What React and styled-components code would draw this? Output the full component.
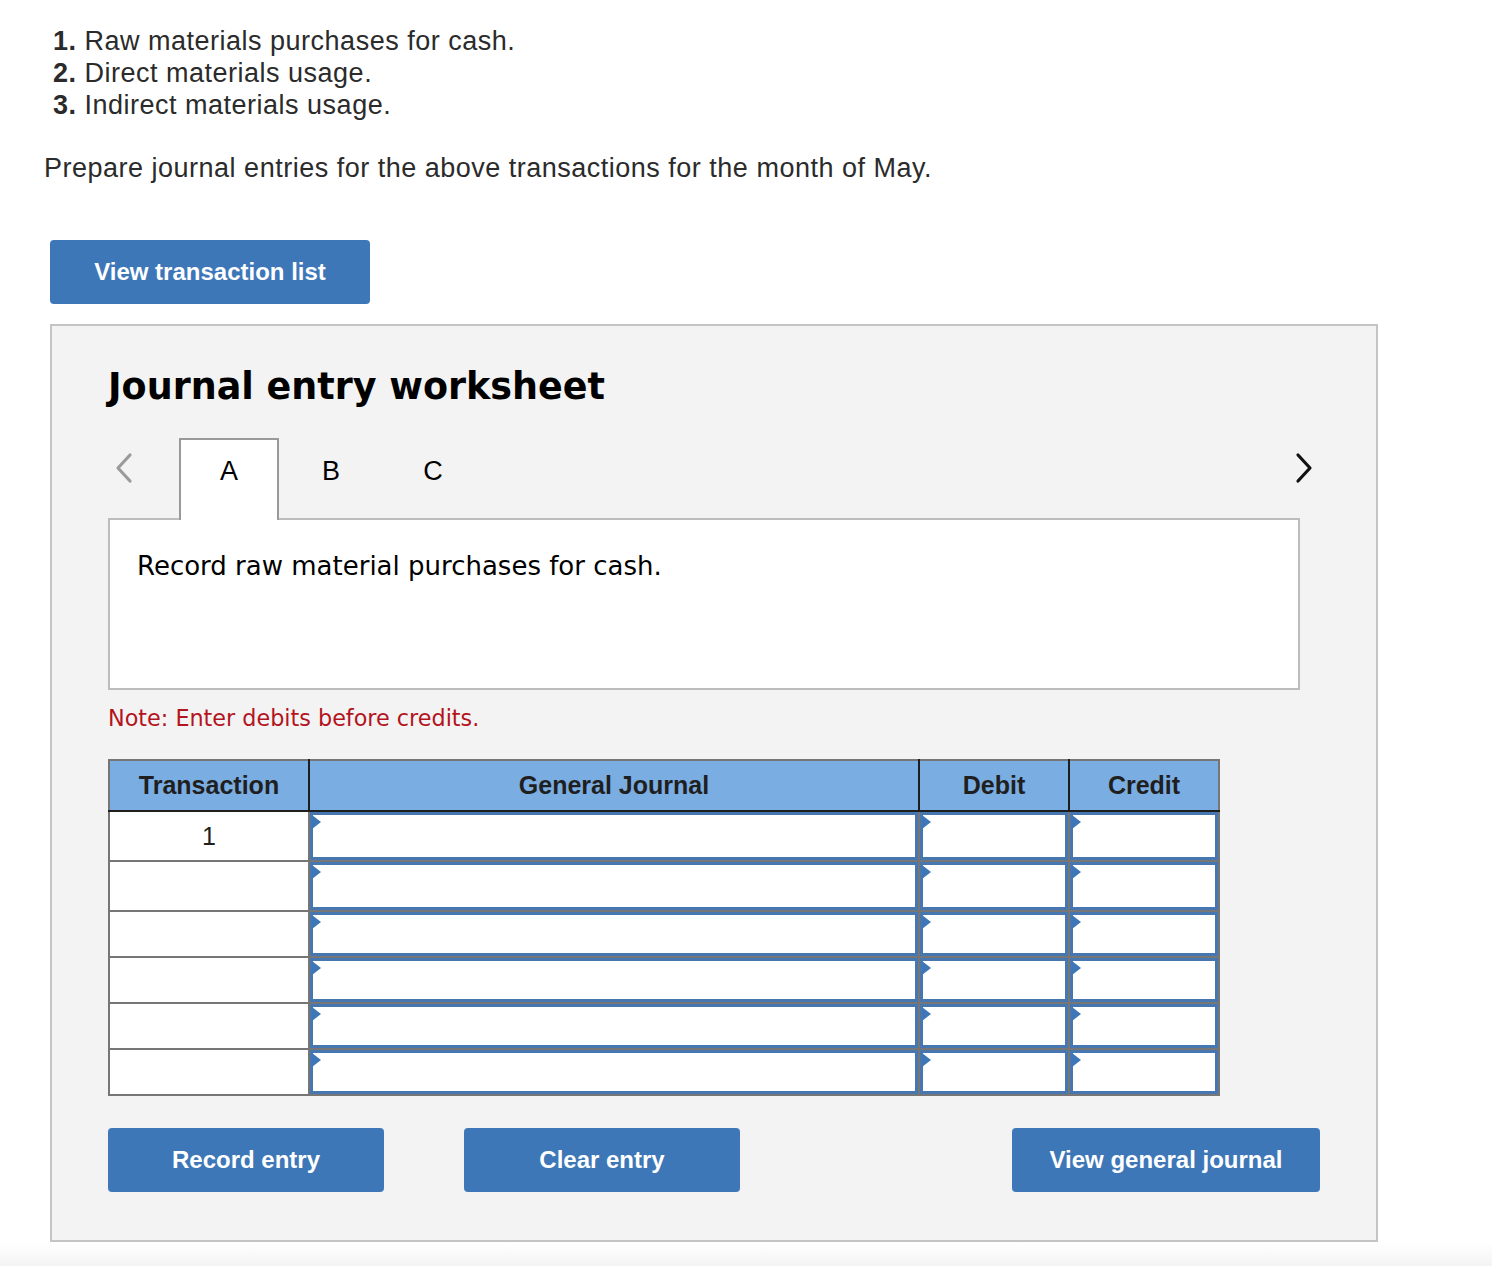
import React from "react";
import styled, { createGlobalStyle } from "styled-components";

const GlobalStyle = createGlobalStyle`
  body {
    margin: 0;
    background: #ffffff;
    font-family: "Liberation Sans", Arial, sans-serif;
    color: #2b2b2b;
  }
`;

const Page = styled.div`
  width: 1492px;
  min-height: 1266px;
  padding-top: 25px;
  box-sizing: border-box;
  background: linear-gradient(to bottom, #ffffff 1242px, #f4f4f4 1266px);
`;

const List = styled.ol`
  list-style: none;
  margin: 0;
  padding: 0 0 0 53px;
  font-size: 27px;
  letter-spacing: 0.5px;
  line-height: 32px;
`;

const Item = styled.li`
  b {
    font-weight: bold;
  }
`;

const Lead = styled.p`
  margin: 31px 0 0 44px;
  font-size: 27px;
  letter-spacing: 0.5px;
  line-height: 32px;
`;

const BlueButton = styled.button`
  display: flex;
  align-items: center;
  justify-content: center;
  width: ${({ w }) => w}px;
  height: 64px;
  border: none;
  border-radius: 4px;
  background: #3d77b8;
  color: #ffffff;
  font-family: "Liberation Sans", Arial, sans-serif;
  font-weight: bold;
  font-size: 24px;
  padding: 0;
  cursor: pointer;
  margin-left: ${({ ml }) => (ml ? `${ml}px` : "0")};
`;

const TopButton = styled(BlueButton)`
  margin: 56px 0 0 50px;
`;

const Panel = styled.section`
  width: 1328px;
  height: 918px;
  margin: 20px 0 0 50px;
  box-sizing: border-box;
  border: 2px solid #c4c4c4;
  background: #f3f3f3;
  padding: 39px 56px 0;
`;

const Title = styled.h2`
  margin: 0;
  font-family: "DejaVu Sans", Verdana, sans-serif;
  font-weight: bold;
  font-size: 36.5px;
  line-height: 44px;
  color: #000;
`;

const TabRow = styled.div`
  display: flex;
  align-items: flex-start;
  height: 82px;
  margin-top: 29px;
  position: relative;
  z-index: 1;
`;

const Arrow = styled.div`
  width: 71px;
  display: flex;
  padding-top: 14px;
  box-sizing: border-box;
  margin-left: ${({ right }) => (right ? "auto" : "0")};
  justify-content: ${({ right }) => (right ? "flex-end" : "flex-start")};
  padding-left: ${({ right }) => (right ? "0" : "6px")};
  padding-right: ${({ right }) => (right ? "6px" : "0")};
`;

const Tab = styled.div`
  width: 100px;
  height: 82px;
  box-sizing: border-box;
  display: flex;
  align-items: center;
  justify-content: center;
  font-family: "Liberation Sans", Arial, sans-serif;
  font-size: 27px;
  color: #000;
  margin-right: 2px;
  background: ${({ active }) => (active ? "#ffffff" : "transparent")};
  border: 2px solid ${({ active }) => (active ? "#999999" : "transparent")};
  border-bottom: none;
  padding-bottom: 18px;
`;

const Prompt = styled.div`
  width: 1192px;
  height: 172px;
  box-sizing: border-box;
  margin-top: -2px;
  border: 2px solid #bdbdbd;
  background: #ffffff;
  padding: 29px 27px;
  font-family: "DejaVu Sans", Verdana, sans-serif;
  font-size: 26px;
  line-height: 34px;
  color: #000;
`;

const Note = styled.p`
  margin: 15px 0 0;
  font-family: "DejaVu Sans", Verdana, sans-serif;
  font-size: 22.3px;
  line-height: 26px;
  color: #b3141d;
`;

const Table = styled.table`
  margin-top: 28px;
  border-collapse: collapse;
  table-layout: fixed;
  width: 1104px;
  border: 2px solid #767676;
`;

const Head = styled.th`
  height: 49px;
  width: ${({ w }) => w}px;
  background: #7aade2;
  font-family: "Liberation Sans", Arial, sans-serif;
  font-weight: bold;
  font-size: 25px;
  color: #1f1f1f;
  border-bottom: 2px solid #1e1e1e;
  border-right: 2px solid ${({ last }) => (last ? "#767676" : "#1e1e1e")};
  padding: 0;
`;

const Row = styled.tr`
  height: ${({ h }) => h}px;
`;

const TxCell = styled.td`
  border: 2px solid #767676;
  background: #ffffff;
  text-align: center;
  vertical-align: top;
  padding: 8px 0 0;
  font-size: 25px;
  line-height: 32px;
  color: #1f1f1f;
`;

const EntryCell = styled.td`
  border: 2px solid #767676;
  padding: 0;
`;

const Field = styled.div`
  position: relative;
  box-sizing: border-box;
  height: ${({ h }) => h}px;
  border: 3px solid #4677b0;
  background: #ffffff;

  &::before {
    content: "";
    position: absolute;
    top: 0;
    left: -1px;
    border-top: 7px solid transparent;
    border-bottom: 7px solid transparent;
    border-left: 9px solid #3d77b8;
  }
`;

const Actions = styled.div`
  display: flex;
  margin-top: 32px;
`;

const Spacer = styled.div`
  flex: 1;
`;

const Chevron = ({ dir, color }) => (
  <svg width="20" height="32" viewBox="0 0 20 32">
    <path
      d={dir === "left" ? "M16 3 L4 16 L16 29" : "M4 3 L16 16 L4 29"}
      fill="none"
      stroke={color}
      strokeWidth="3.2"
      strokeLinecap="round"
      strokeLinejoin="round"
    />
  </svg>
);

const rows = [
  { tx: "1", h: 48 },
  { tx: "", h: 48 },
  { tx: "", h: 44 },
  { tx: "", h: 44 },
  { tx: "", h: 44 },
  { tx: "", h: 44 },
];

export default function App() {
  return (
    <Page>
      <GlobalStyle />
      <List>
        <Item>
          <b>1.</b> Raw materials purchases for cash.
        </Item>
        <Item>
          <b>2.</b> Direct materials usage.
        </Item>
        <Item>
          <b>3.</b> Indirect materials usage.
        </Item>
      </List>
      <Lead>Prepare journal entries for the above transactions for the month of May.</Lead>
      <TopButton w={320}>View transaction list</TopButton>

      <Panel>
        <Title>Journal entry worksheet</Title>
        <TabRow>
          <Arrow>
            <Chevron dir="left" color="#9a9a9a" />
          </Arrow>
          <Tab active>A</Tab>
          <Tab>B</Tab>
          <Tab>C</Tab>
          <Arrow right>
            <Chevron dir="right" color="#111111" />
          </Arrow>
        </TabRow>
        <Prompt>Record raw material purchases for cash.</Prompt>
        <Note>Note: Enter debits before credits.</Note>

        <Table>
          <thead>
            <tr>
              <Head w={198}>Transaction</Head>
              <Head w={608}>General Journal</Head>
              <Head w={148}>Debit</Head>
              <Head w={148} last>
                Credit
              </Head>
            </tr>
          </thead>
          <tbody>
            {rows.map((r, i) => (
              <Row key={i} h={r.h}>
                <TxCell>{r.tx}</TxCell>
                <EntryCell>
                  <Field h={r.h} />
                </EntryCell>
                <EntryCell>
                  <Field h={r.h} />
                </EntryCell>
                <EntryCell>
                  <Field h={r.h} />
                </EntryCell>
              </Row>
            ))}
          </tbody>
        </Table>

        <Actions>
          <BlueButton w={276}>Record entry</BlueButton>
          <BlueButton w={276} ml={80}>
            Clear entry
          </BlueButton>
          <Spacer />
          <BlueButton w={308}>View general journal</BlueButton>
        </Actions>
      </Panel>
    </Page>
  );
}
